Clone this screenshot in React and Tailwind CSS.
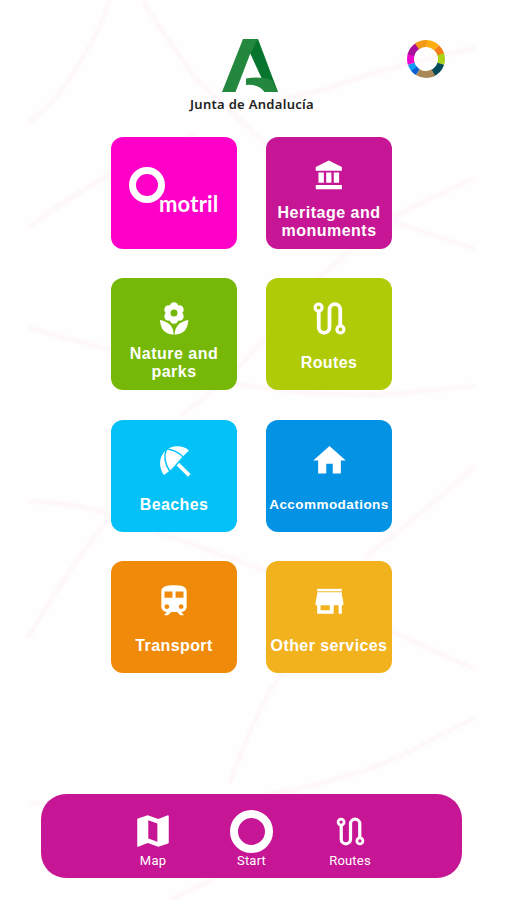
import { MdHome, MdTrain } from 'react-icons/md';

const PETALS = [[221, 111], [237, 120], [237, 140], [221, 149], [205, 140], [205, 120]];

function BankIcon({ size, className }) {
  return (
    <svg width={size} height={size} viewBox="0 0 24 24" fill="currentColor" className={className}>
      <path d="M11.5 1L2 5.8V8.6H21V5.8ZM4 9.8h3.9v7.4H4ZM9.6 9.8h3.8v7.4H9.6ZM15.1 9.8H19v7.4h-3.9ZM2 18.9h19V22H2Z" />
    </svg>
  );
}

function FlowerIcon({ size, className }) {
  return (
    <svg width={size} height={size} viewBox="167 91 108 108" fill="currentColor" className={className}>
      {PETALS.map(([x, y]) => (
        <circle key={`${x}-${y}`} cx={x} cy={y} r="13" />
      ))}
      <circle cx="221" cy="130" r="15.500" fill="none" stroke="currentColor" strokeWidth="11" />
      <circle cx="221" cy="130" r="10.500" fill="#76b807" />
      <path d="M179 151Q181 193 220 195Q220 159 179 151ZM264 151Q262 193 223 195Q223 159 264 151Z" />
    </svg>
  );
}

function RouteIcon({ size, className }) {
  return (
    <svg width={size} height={size} viewBox="0 0 24 24" fill="none" stroke="currentColor" strokeWidth="2.1" className={className}>
      <circle cx="5.9" cy="5.9" r="1.95" strokeWidth="1.8" />
      <circle cx="18.1" cy="18.1" r="1.95" strokeWidth="1.8" />
      <path d="M6 8.2V17a3 3 0 0 0 6 0V7a3 3 0 0 1 6 0v8.8" />
    </svg>
  );
}

function UmbrellaIcon({ size, className }) {
  return (
    <svg width={size} height={size} viewBox="168 96 104 104" fill="none" className={className}>
      <path d="M189 191C174 172 172 142 190 122C210 101 243 101 263 118L241 140L211 174Z" fill="currentColor" />
      <path d="M196 114C187 137 191 158 206 180M197 114C216 115 232 124 248 139" stroke="#04c2f7" strokeWidth="4.5" />
      <path d="M230 159L264 192" stroke="currentColor" strokeWidth="11" />
    </svg>
  );
}

function StoreIcon({ size, className }) {
  return (
    <svg width={size} height={size} viewBox="0 0 24 24" fill="currentColor" className={className}>
      <path d="M4 3.800h16v1.600H4Z" />
      <path
        fillRule="evenodd"
        d="M4 6h16v1.5l1 4.8V14.4h-1V20h-2.1v-5.6h-3.2V20H4v-5.6H3v-2.1l1-4.8ZM6.2 14.4v3.3h6v-3.3Z"
      />
    </svg>
  );
}

function MapIcon({ size, className }) {
  return (
    <svg width={size} height={size} viewBox="0 0 24 24" fill="currentColor" className={className}>
      <path
        fillRule="evenodd"
        d="M20.5 3L15 5.1 9 3 3.36 4.9Q3 5 3 5.4V20.5Q3 21 3.5 21L9 18.9l6 2.1 5.64-1.9Q21 19 21 18.6V3.5Q21 3 20.5 3ZM9.3 5.9l5.2 1.8v10.4l-5.2-1.8Z"
      />
    </svg>
  );
}

const TILES = [
  { id: 'heritage', label: 'Heritage and monuments', icon: BankIcon, size: 33, color: 'bg-[#c71695]', pad: 'pt-[22px]', text: 'mt-[12px] text-[16px] tracking-[0.5px]' },
  { id: 'nature', label: 'Nature and parks', icon: FlowerIcon, size: 36, color: 'bg-[#76b807]', pad: 'pt-[22px]', text: 'mt-[9px] text-[16px] tracking-[0.5px]' },
  { id: 'routes', label: 'Routes', icon: RouteIcon, size: 43, color: 'bg-[#afcb08]', pad: 'pt-[19px]', text: 'mt-[14px] text-[16px] tracking-[0.4px]' },
  { id: 'beaches', label: 'Beaches', icon: UmbrellaIcon, size: 35, color: 'bg-[#04c2f7]', pad: 'pt-[23px]', text: 'mt-[18px] text-[16px] tracking-[0.4px]' },
  { id: 'accommodations', label: 'Accommodations', icon: MdHome, size: 39, color: 'bg-[#0492e5]', pad: 'pt-[21px]', text: 'mt-[16px] text-[13.5px] tracking-[0.45px]' },
  { id: 'transport', label: 'Transport', icon: MdTrain, size: 38, color: 'bg-[#ef8a0b]', pad: 'pt-[21px]', text: 'mt-[17px] text-[16px] tracking-[0.4px]' },
  { id: 'services', label: 'Other services', icon: StoreIcon, size: 37, color: 'bg-[#f2b21e]', pad: 'pt-[22px]', text: 'mt-[17px] text-[16px] tracking-[0.4px]' },
];

// start and sweep are in percent of the circle, clockwise from three o'clock
const RING = [
  { color: '#a8d318', start: 94, sweep: 11 },
  { color: '#064a59', start: 5, sweep: 14 },
  { color: '#a98858', start: 17, sweep: 17 },
  { color: '#075fd0', start: 34, sweep: 6 },
  { color: '#129bf5', start: 39, sweep: 6 },
  { color: '#ed06cc', start: 45, sweep: 10 },
  { color: '#a9109c', start: 54, sweep: 12 },
  { color: '#f49a16', start: 65, sweep: 11 },
  { color: '#ffad0d', start: 76, sweep: 11 },
  { color: '#f77d16', start: 87, sweep: 8 },
];

function Background() {
  return (
    <svg
      className="absolute inset-0 -z-10 blur-[1px]"
      width="506"
      height="900"
      fill="none"
      stroke="#fdf7fb"
      strokeWidth="5"
    >
      <path d="M110 0Q99 32 76 69T28 123" />
      <path d="M142 0Q169 42 196 79L267 145" />
      <path d="M28 228Q70 196 111 174L196 133" />
      <path d="M265 104L330 88Q380 69 475 48" />
      <path d="M392 218Q430 198 475 178" />
      <path d="M392 221L475 249" />
      <path d="M28 328L112 350Q180 360 238 384Q310 397 392 394L475 386" />
      <path d="M180 416Q250 365 295 300L355 246" />
      <path d="M28 501Q80 503 112 516L267 571L392 632L475 669" />
      <path d="M28 638Q66 572 104 525L190 420" />
      <path d="M365 557Q420 516 475 466" />
      <path d="M230 783Q252 720 279 676L330 590" />
      <path d="M265 795Q350 780 400 756L475 718" />
      <path d="M30 803L90 807" />
      <path d="M170 900L215 878" />
    </svg>
  );
}

function JuntaLogo() {
  return (
    <div className="flex flex-col items-center">
      <svg width="56" height="54" viewBox="0 0 56 54" className="mr-[3px]">
        <path d="M29 0H36L56 53H46L28 14Z" fill="#08752f" />
        <path d="M21 0H36L28.5 14L13.5 53H0Z" fill="#23873d" />
        <path d="M24 39.5Q38 37 50 41L55.5 53H42.5Q36 44.5 24 46Z" fill="#23873d" />
      </svg>
      <span className="mt-[2px] whitespace-nowrap font-['Noto_Sans',sans-serif] text-[13px] font-semibold leading-[18px] tracking-[0.3px] text-[#222]">
        Junta de Andalucía
      </span>
    </div>
  );
}

function ColorRing() {
  return (
    <svg width="40" height="40" viewBox="0 0 40 40" fill="none">
      {RING.map((s) => (
        <circle
          key={s.color}
          cx="20"
          cy="20"
          r="15.5"
          stroke={s.color}
          strokeWidth="7"
          pathLength="100"
          strokeDasharray={`${s.sweep} ${100 - s.sweep}`}
          strokeDashoffset={-s.start}
        />
      ))}
    </svg>
  );
}

function MotrilTile() {
  return (
    <button className="flex h-[112px] w-[126px] items-start rounded-xl bg-[#ff00c8] pl-[18px] pt-[30px] text-white">
      <div className="h-9 w-9 shrink-0 rounded-full border-[7px] border-white" />
      <span className="-ml-[6px] mt-[24px] font-['Lato',sans-serif] text-[22px] font-bold leading-[26px] tracking-[0.2px]">
        motril
      </span>
    </button>
  );
}

function Tile({ label, icon: Icon, size, color, pad, text }) {
  return (
    <button className={`flex h-[112px] w-[126px] flex-col items-center rounded-xl text-white ${color} ${pad}`}>
      <Icon size={size} className="shrink-0" />
      <span className={`font-['Liberation_Sans',sans-serif] text-center font-bold leading-[18px] ${text}`}>{label}</span>
    </button>
  );
}

function NavItem({ label, children }) {
  return (
    <button className="flex w-[98.5px] flex-col items-center">
      <span className="flex h-[46px] items-center">{children}</span>
      <span className="mt-[-1px] font-['Roboto',sans-serif] text-[13px] leading-4 tracking-[0.2px]">{label}</span>
    </button>
  );
}

export default function App() {
  return (
    <div className="relative isolate flex h-[900px] w-[506px] flex-col overflow-hidden bg-[#fffefe]">
      <Background />
      <header className="flex h-[137px] justify-between pl-[187px] pr-[60px] pt-[39px]">
        <div className="flex w-[130px] justify-center">
          <JuntaLogo />
        </div>
        <ColorRing />
      </header>

      <main className="ml-[111px] grid grid-cols-[126px_126px] gap-x-[29px] gap-y-[29.4px]">
        <MotrilTile />
        {TILES.map(({ id, ...tile }) => (
          <Tile key={id} {...tile} />
        ))}
      </main>

      <nav className="mb-[22px] ml-[41px] mt-auto flex h-[84px] w-[421px] justify-center rounded-[25px] bg-[#c71695] pt-[14px] text-white">
        <NavItem label="Map">
          <MapIcon size={42} />
        </NavItem>
        <NavItem label="Start">
          <span className="h-[43px] w-[43px] rounded-full border-8 border-white" />
        </NavItem>
        <NavItem label="Routes">
          <RouteIcon size={37} />
        </NavItem>
      </nav>
    </div>
  );
}
